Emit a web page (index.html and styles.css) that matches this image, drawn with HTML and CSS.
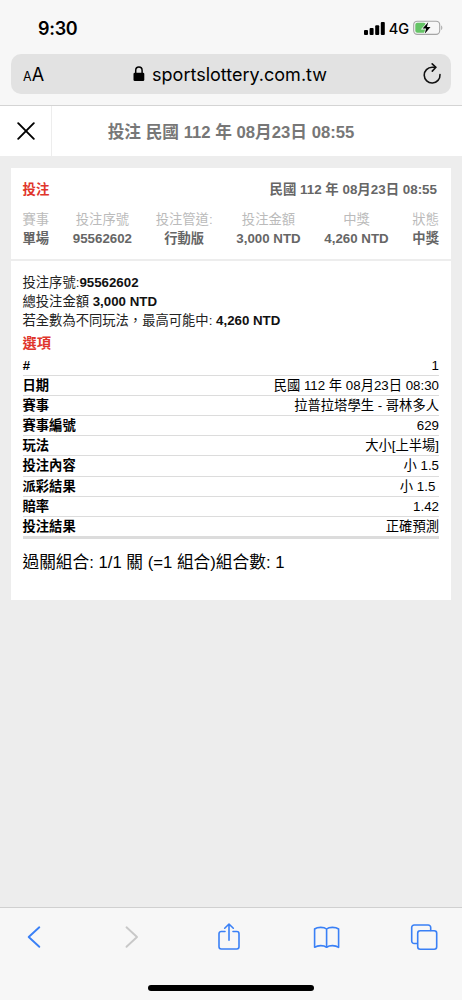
FILE: index.html
```html
<!DOCTYPE html>
<html lang="zh-Hant">
<head>
    <meta charset="UTF-8">
    <meta name="viewport" content="width=device-width, initial-scale=1.0">
    <title>投注</title>
    <link rel="stylesheet" href="styles.css">
</head>
<body>
    <div class="browser-top">
        <div class="status-bar">
            <span class="clock">9:30</span>
            <div class="status-right">
                <svg class="signal" width="21" height="13" viewBox="0 0 21 13">
                    <rect x="0" y="8" width="4" height="5" rx="1"/>
                    <rect x="5.6" y="6" width="4" height="7" rx="1"/>
                    <rect x="11.2" y="3.3" width="4" height="9.7" rx="1"/>
                    <rect x="16.8" y="0" width="4" height="13" rx="1"/>
                </svg>
                <span class="network">4G</span>
                <svg class="battery" width="30" height="16" viewBox="0 0 30 16">
                    <rect x="0.7" y="1.2" width="26" height="13.2" rx="3.6" fill="none" stroke="#a5a5a5" stroke-width="1.1"/>
                    <path d="M28.2 5.5v4.6c1.5-.6 1.5-4 0-4.6z" fill="#a5a5a5"/>
                    <rect x="2.3" y="2.8" width="10.5" height="10" rx="2" fill="#65c466"/>
                    <path d="M15.2 2.3L9.6 8.6h3.5l-1.3 5.2 5.7-6.7h-3.6z" fill="#000" stroke="#f7f7f7" stroke-width="1.6" paint-order="stroke"/>
                </svg>
            </div>
        </div>
        <div class="url-bar">
            <span class="text-size"><small>A</small>A</span>
            <div class="address">
                <svg width="12" height="16" viewBox="0 0 12 16">
                    <path d="M2.7 8V4.5a3.2 3.4 0 0 1 6.4 0V8" fill="none" stroke="#000" stroke-width="1.5"/>
                    <rect x="0.5" y="6.8" width="10.8" height="8.2" rx="1.3"/>
                </svg>
                <span>sportslottery.com.tw</span>
            </div>
            <svg class="reload" width="20" height="22" viewBox="0 0 20 22" fill="none" stroke="#111" stroke-width="1.6" stroke-linecap="round" stroke-linejoin="round">
                <path d="M18 11.6A7.9 7.9 0 1 1 10.1 4.2h3.4"/>
                <path d="M10.2 .9l3.7 3.4-3.6 3.8"/>
            </svg>
        </div>
    </div>

    <div class="title-bar">
        <div class="close">
            <svg width="18" height="18" viewBox="0 0 18 18" stroke="#000" stroke-width="1.9" stroke-linecap="round">
                <path d="M1.2 1.2l15.6 15.6M16.8 1.2L1.2 16.8"/>
            </svg>
        </div>
        <h1>投注 民國 112 年 08月23日 08:55</h1>
    </div>

    <div class="page">
        <div class="card summary">
            <div class="summary-head">
                <span class="red">投注</span>
                <span>民國 112 年 08月23日 08:55</span>
            </div>
            <div class="summary-cols">
                <div><label>賽事</label><b>單場</b></div>
                <div><label>投注序號</label><b>95562602</b></div>
                <div><label>投注管道:</label><b>行動版</b></div>
                <div><label>投注金額</label><b>3,000 NTD</b></div>
                <div><label>中獎</label><b>4,260 NTD</b></div>
                <div><label>狀態</label><b>中獎</b></div>
            </div>
        </div>
        <div class="card detail">
            <p>投注序號:<b>95562602</b></p>
            <p>總投注金額 <b>3,000 NTD</b></p>
            <p>若全數為不同玩法，最高可能中: <b>4,260 NTD</b></p>
            <h3 class="red">選項</h3>
            <div class="rows">
                <div class="row"><b><i>#</i></b><span>1</span></div>
                <div class="row"><b>日期</b><span>民國 112 年 08月23日 08:30</span></div>
                <div class="row"><b>賽事</b><span>拉普拉塔學生 - 哥林多人</span></div>
                <div class="row"><b>賽事編號</b><span>629</span></div>
                <div class="row"><b>玩法</b><span>大小[上半場]</span></div>
                <div class="row"><b>投注內容</b><span>小 1.5</span></div>
                <div class="row"><b>派彩結果</b><span>小 1.5&nbsp;</span></div>
                <div class="row"><b>賠率</b><span>1.42</span></div>
                <div class="row"><b>投注結果</b><span>正確預測</span></div>
            </div>
            <div class="combo">過關組合: 1/1 關 (=1 組合)組合數: 1</div>
        </div>
    </div>

    <div class="browser-bottom">
        <div class="toolbar">
            <svg width="28" height="30" viewBox="0 0 28 30">
                <path class="chevron" d="M19.3 5.3L8.7 15l10.6 9.8"/>
            </svg>
            <svg class="disabled" width="28" height="30" viewBox="0 0 28 30">
                <path class="chevron" d="M8.5 5.3L19 15 8.5 24.8"/>
            </svg>
            <svg width="28" height="30" viewBox="0 0 28 30">
                <path d="M10 9.5H6.2a2.2 2.2 0 0 0-2.2 2.2v13.1a2.2 2.2 0 0 0 2.2 2.2h15.6a2.2 2.2 0 0 0 2.2-2.2V11.7a2.2 2.2 0 0 0-2.2-2.2H18"/>
                <path d="M14 18.3V2.3M9.7 6.2L14 2l4.3 4.2"/>
            </svg>
            <svg width="28" height="30" viewBox="0 0 28 30">
                <path d="M13.6 7C11 4.8 4.5 4.8 1.6 7v18.3c3.2-2.2 9.2-2.2 12 0 2.8-2.2 8.8-2.2 12 0V7C22.6 4.8 16.1 4.8 13.6 7zM13.6 7v18.3"/>
            </svg>
            <svg width="28" height="30" viewBox="0 0 28 30">
                <path d="M7 21.5H4.2a2.5 2.5 0 0 1-2.5-2.5V5.5A2.5 2.5 0 0 1 4.2 3h14a2.5 2.5 0 0 1 2.5 2.5V8.500"/>
                <rect x="7.7" y="8.7" width="19" height="18.5" rx="2.5"/>
            </svg>
        </div>
        <div class="home-bar"></div>
    </div>
</body>
</html>
```
FILE: styles.css
```css
* {
    box-sizing: border-box;
}
body {
    margin: 0;
    height: 1000px;
    display: flex;
    flex-direction: column;
    overflow: hidden;
    background-color: #ededed;
    color: #000;
    font-family: "Liberation Sans", "Noto Sans CJK TC", sans-serif;
    font-size: 13.3px;
}
svg {
    display: block;
    flex: none;
}
.browser-top {
    height: 106px;
    background: #f7f7f7;
    border-bottom: 1px solid #d4d4d4;
    font-family: Inter, sans-serif;
}
.status-bar {
    height: 54px;
    padding: 2px 19px 0 38px;
    display: flex;
    align-items: center;
    justify-content: space-between;
}
.clock {
    font-size: 18px;
    font-weight: 600;
    letter-spacing: -0.3px;
}
.status-right {
    display: flex;
    align-items: center;
}
.network {
    font-size: 14.5px;
    font-weight: 500;
    margin: 0 4px;
}
.url-bar {
    height: 40px;
    margin: 0 11px;
    padding: 0 9px 0 12px;
    border-radius: 10px;
    background: #e2e2e2;
    display: flex;
    align-items: center;
    justify-content: space-between;
}
.text-size {
    font-size: 18px;
}
.text-size small {
    font-size: 12.5px;
}
.address {
    display: flex;
    align-items: center;
    gap: 7px;
    margin-right: 6px;
    font-size: 18px;
}
.title-bar {
    height: 50px;
    background: #fff;
    display: flex;
    align-items: center;
}
.close {
    width: 52px;
    height: 50px;
    display: flex;
    align-items: center;
    justify-content: center;
    border-right: 1px solid #ededed;
}
.title-bar h1 {
    flex: 1;
    margin: 0;
    padding: 0 52px 1px 0;
    text-align: center;
    white-space: nowrap;
    font-size: 16.7px;
    font-weight: bold;
    color: #777;
}
.page {
    flex: 1;
    padding: 12px 11px 0;
}
.card {
    background: #fff;
    padding: 0 12px 0 11.5px;
}
.red {
    color: #e0352b;
    font-weight: bold;
}
.summary {
    height: 91px;
    padding: 12px 9px 0 11.5px;
    color: #666;
}
.summary-head {
    display: flex;
    justify-content: space-between;
    padding-right: 5px;
    line-height: 20px;
    font-size: 13.4px;
    font-weight: bold;
}
.summary-cols {
    display: flex;
    justify-content: space-between;
    margin-top: 10px;
    padding-right: 3px;
    text-align: center;
    line-height: 19px;
}
.summary-cols label,
.summary-cols b {
    display: block;
}
.summary-cols label {
    color: #bbb;
}
.detail {
    height: 339px;
    margin-top: 2px;
    padding-top: 12px;
}
.detail p {
    margin: 0;
    line-height: 19px;
    color: #222;
}
.detail p b {
    color: #111;
}
.detail h3 {
    margin: 3px 0;
    font-size: 14.2px;
    line-height: 20px;
}
.rows {
    border-bottom: 3px solid #dcdcdc;
}
.row {
    height: 20.1px;
    display: flex;
    justify-content: space-between;
    line-height: 20.4px;
    border-bottom: 1px solid #dcdcdc;
}
.row:last-child {
    height: 19px;
    border-bottom: none;
}
.combo {
    margin-top: 12px;
    font-size: 16.7px;
    line-height: 24px;
}
.browser-bottom {
    height: 93px;
    background: #f7f7f7;
    border-top: 1px solid #d0d0d0;
}
.toolbar {
    height: 58px;
    padding: 0 24px 0 20px;
    display: flex;
    align-items: center;
    justify-content: space-between;
}
.toolbar svg {
    fill: none;
    stroke: #3a80f6;
    stroke-width: 1.6;
    stroke-linecap: round;
    stroke-linejoin: round;
}
.toolbar .chevron {
    stroke-width: 1.9;
}
.toolbar .disabled {
    stroke: #c8c8c8;
}
.home-bar {
    width: 166px;
    height: 6px;
    margin: 19px auto 0;
    border-radius: 3px;
    background: #000;
}
```
